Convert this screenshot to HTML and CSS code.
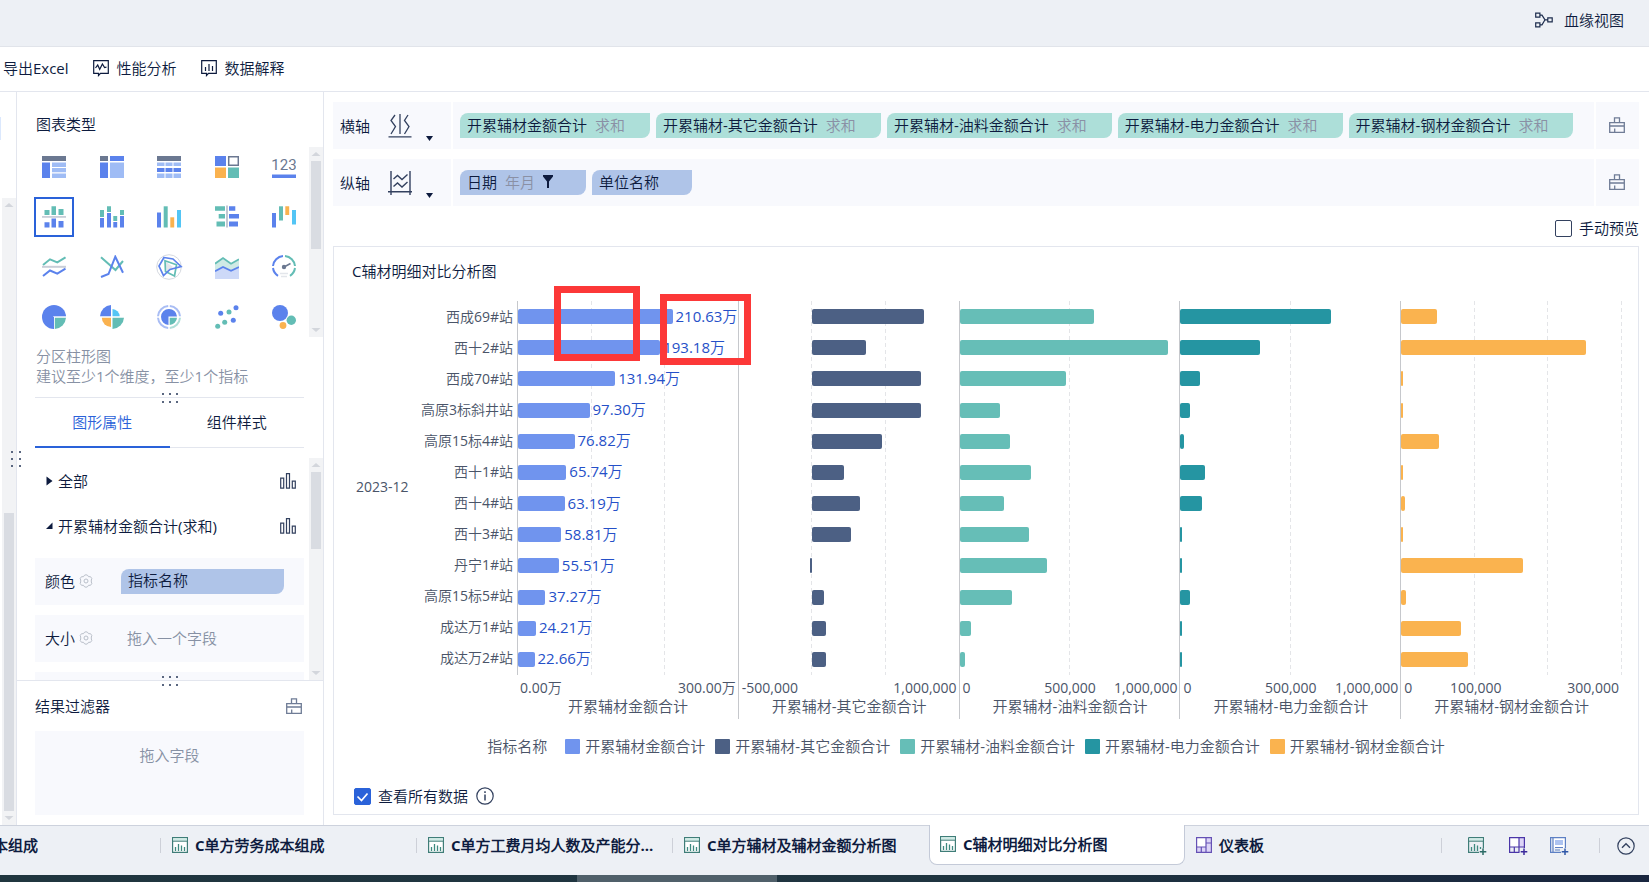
FILE: index.html
```html
<!DOCTYPE html>
<html lang="zh-CN">
<head>
<meta charset="utf-8">
<title>C辅材明细对比分析图</title>
<link rel="stylesheet" href="styles.css">
</head>
<body>
<svg class="defs" aria-hidden="true">
  <symbol id="brush" viewBox="0 0 16 16"><path d="M.7 5.7h14.6v9.6H.7zM5.5 5.7V.8h5v4.9M.7 9h14.6M5.7 11.5v3.8" fill="none" stroke="#6f7c96" stroke-width="1.3"/></symbol>
  <symbol id="bars" viewBox="0 0 16 16"><path d="M.7 5.2h3v10H.7zM6.5.7h3v14.5h-3zM12.3 8.2h3v7h-3z" fill="none" stroke="#33415f" stroke-width="1.2"/></symbol>
  <symbol id="gear" viewBox="0 0 14 14"><path d="M5.2 1.500L7 .700l1.800.800.700 1.200h2l1.300 1.800-.500 1.500v2l.5 1.500-1.300 1.800h-2l-.700 1.200-1.800.800-1.800-.800-.700-1.200h-2L1.200 9.500 1.700 8V6l-.500-1.500 1.300-1.800h2z" fill="none" stroke="#b9bfc9"/><circle cx="7" cy="7" r="2" fill="none" stroke="#b9bfc9"/></symbol>
  <symbol id="sheet" viewBox="0 0 16 16"><path d="M.6.6h14.8v14.8H.6z" fill="#fff" stroke="#3f7d78" stroke-width="1.2"/><path d="M1.2 1.2h13.6v2.6H1.2z" fill="#cfeae5"/><path d="M1 4.2h14" stroke="#3f7d78"/><path d="M3.5 10v4M6.5 7v7M9.5 8.5V14M12.5 10v4" stroke="#3f8a80" stroke-width="1.3"/></symbol>
  <symbol id="board" viewBox="0 0 16 16"><path d="M.6.6h14.800v14.800H.6z" fill="#dcd4f7"/><path d="M1 1h9v9H1z" fill="#fff"/><path d="M.6.6h14.8v14.8H.6zM10 .6v14.8M.6 10h9.400M5.3 10v5.4M10 6h5.4" fill="none" stroke="#6551b5" stroke-width="1.2"/></symbol>
  <symbol id="up" viewBox="0 0 10 4"><path d="M5 0l4.5 4h-9z" fill="#d3d6dc"/></symbol>
  <symbol id="down" viewBox="0 0 10 4"><path d="M5 4L.5 0h9z" fill="#d3d6dc"/></symbol>
  <symbol id="dots" viewBox="0 0 18 11"><path d="M1 1h2v2H1zM8 1h2v2H8zM15 1h2v2h-2zM1 9h2v2H1zM8 9h2v2H8zM15 9h2v2h-2z" fill="#5a6780"/></symbol>
</svg>

<header class="topbar">
  <a class="lineage" href="#">
    <svg width="18" height="16" viewBox="0 0 18 16"><path d="M.7 1.2h4.2v4H.7zM.7 10.8h4.2v4H.7zM12.8 5.8h4.4v4h-4.4zM5 3.2h2l3 4.6h2.8M5 12.8h2l3-5" fill="none" stroke="#1d2c4d" stroke-width="1.2"/></svg>
    血缘视图
  </a>
</header>

<nav class="toolbar">
  <button type="button">导出Excel</button>
  <button type="button"><svg width="16" height="17" viewBox="0 0 16 17"><path d="M.7.7h14.6v12.6H7.5l-2 2.2v-2.2H.7z" fill="none" stroke="#0d1b3e" stroke-width="1.2"/><path d="M2.5 8l2.2-3 2 4.3 2.7-5.3 2.2 3.6 1.9-.4" fill="none" stroke="#0d1b3e" stroke-width="1.2"/></svg>性能分析</button>
  <button type="button"><svg width="16" height="17" viewBox="0 0 16 17"><path d="M.7.7h14.6v12.6H7.5l-2 2.2v-2.2H.7z" fill="none" stroke="#0d1b3e" stroke-width="1.2"/><path d="M4.5 7v4M8 4v7M11.5 6v5" stroke="#0d1b3e" stroke-width="1.2"/></svg>数据解释</button>
</nav>

<div class="workspace">
  <aside class="rail">
    <div class="rail-top"><span class="rail-hint"></span></div>
    <div class="scroll rail-scroll"><svg><use href="#up"/></svg><span class="gap"></span><i class="thumb"></i><svg><use href="#down"/></svg></div>
  </aside>

  <aside class="panel">
    <svg class="side-dots" width="11" height="18" viewBox="0 0 11 18"><path d="M1 1h2v2H1zM9 1h2v2H9zM1 8h2v2H1zM9 8h2v2H9zM1 15h2v2H1zM9 15h2v2H9z" fill="#5a6780"/></svg>
    <h2 class="panel-title">图表类型</h2>
    <div class="with-scroll">
      <div class="types">
        <button type="button" aria-label="分组表"><svg viewBox="0 0 24 24"><path fill="#6b7891" d="M0 1h24v5H0z"/><path fill="#5b82ec" d="M0 7.5h8V23H0z"/><path fill="#9fbcf5" d="M10 7.5h14V12H10zM10 13h14v4.300H10zM10 18.500h14V23H10z"/></svg></button>
        <button type="button" aria-label="交叉表"><svg viewBox="0 0 24 24"><path fill="#6b7891" d="M0 1h8v5H0z"/><path fill="#5b82ec" d="M10 1h14v5H10zM0 7.500h8V23H0z"/><path fill="#9fbcf5" d="M10 7.500h14V23H10z"/></svg></button>
        <button type="button" aria-label="明细表"><svg viewBox="0 0 24 24"><path fill="#6b7891" d="M0 1h24v5H0z"/><path fill="#9fbcf5" d="M0 7.500h7.500V11H0zM8.500 7.500h7V11h-7zM16.500 7.500H24V11h-7.500zM0 18.500h7.500V23H0zM8.500 18.500h7V23h-7zM16.500 18.500H24V23h-7.500z"/><path fill="#5b82ec" d="M0 13h7.500v4H0zM8.500 13h7v4h-7zM16.500 13H24v4h-7.500z"/></svg></button>
        <button type="button" aria-label="颜色表格"><svg viewBox="0 0 24 24"><path fill="#5b82ec" d="M0 1h11v10H0z"/><path fill="none" stroke="#6b7891" stroke-width="1.500" d="M13.700 1.700h9.600v8.500h-9.600z"/><path fill="#fab24f" d="M0 12.500h11V23H0z"/><path fill="#63bdb5" d="M13 12.500h11V23H13z"/></svg></button>
        <button type="button" aria-label="KPI指标卡"><svg viewBox="0 0 24 24"><text class="kpi" x="12" y="14.500" text-anchor="middle">123</text><path fill="#5b82ec" d="M0 19.500h24V23H0z"/></svg></button>

        <button type="button" class="on" aria-label="分区柱形图"><svg viewBox="0 0 24 24"><path fill="#63bdb5" d="M2.500 5h5v5h-5zM9.500 1.300H14V10H9.500zM16.500 4h5v6h-5z"/><path fill="#c9ced8" d="M0 11h24v1.800H0z"/><path fill="#5b82ec" d="M2.500 17.300h5v5.200h-5zM9.500 13.500H14v9H9.500zM16.500 16h5v6.500h-5z"/></svg></button>
        <button type="button" aria-label="堆积柱形图"><svg viewBox="0 0 24 24"><path fill="#63bdb5" d="M0 5h4v7H0zM7 1.300h4V7H7zM13.300 11h3.900v5h-3.900zM20 5h4v5h-4z"/><path fill="#5b82ec" d="M0 13h4v9.500H0zM7 8h4v14.500H7zM13.300 17h3.900v5.500h-3.900zM20 11h4v11.500h-4z"/></svg></button>
        <button type="button" aria-label="多系列柱形图"><svg viewBox="0 0 24 24"><path fill="#5b82ec" d="M0 7.500h4v15H0z"/><path fill="#63bdb5" d="M6.700 1.300h4v21.200h-4z"/><path fill="#fab24f" d="M13.300 12.300h3.900v10.200h-3.900z"/><path fill="#53c5f5" d="M20 5h4v17.500h-4z"/></svg></button>
        <button type="button" aria-label="对比柱状图"><svg viewBox="0 0 24 24"><path fill="#63bdb5" d="M0 1.300h10v4.500H0zM3.700 9H10v4.500H3.700zM1.500 16.500H10V21.500H1.500z"/><path fill="#c3c8d3" d="M11 .5h2v22h-2z"/><path fill="#5b82ec" d="M14 1.300h6.300v4.500H14zM14 9h10v4.500H14zM14 16.500h9V21.500h-9z"/></svg></button>
        <button type="button" aria-label="瀑布图"><svg viewBox="0 0 24 24"><path fill="#5b82ec" d="M0 8h4v14.500H0z"/><path fill="#63bdb5" d="M7 1.300h4V15.500H7z"/><path fill="#fab24f" d="M13.300 1.300h3.900V10h-3.900z"/><path fill="#53c5f5" d="M20 5h4v14.500h-4z"/></svg></button>

        <button type="button" aria-label="分区折线图"><svg viewBox="0 0 24 24"><g fill="none" stroke-width="2"><path stroke="#63bdb5" d="M1 10l7-5.700 7.300 3L23.500 2.300"/><path stroke="#c9ced8" d="M0 11.800h24"/><path stroke="#5b82ec" d="M1 21l7-5.500 7.300 3.200 8.200-5"/></g></svg></button>
        <button type="button" aria-label="多系列折线图"><svg viewBox="0 0 24 24"><g fill="none" stroke-width="2"><path stroke="#63bdb5" d="M1 2.300L15.500 15 23 6"/><path stroke="#5b82ec" d="M1 22l7.500-3 6.800-17.300L23 17.700"/></g></svg></button>
        <button type="button" aria-label="雷达图"><svg viewBox="0 0 24 24" overflow="visible"><circle cx="12" cy="12" r="12.300" fill="none" stroke="#d5d9e0"/><path fill="#e3e6eb" d="M8 6l8 6-6 5z"/><g fill="none" stroke-width="1.700"><path stroke="#63bdb5" d="M8 5.700l11.500 4-2 11.300-9-4.500z"/><path stroke="#5b82ec" d="M7 2.500l9 1.500 8 7.500-11 3L6.500 20.500 2 11z"/></g></svg></button>
        <button type="button" aria-label="面积图"><svg viewBox="0 0 24 24"><path fill="#cfeae5" d="M0 8.700L8 3l8 5.700 8-4.400V12l-8 3.700L8 12l-8 4.300z"/><path fill="#cdd9f8" d="M0 16.300L8 12l8 3.700L24 12v12H0z"/><g fill="none" stroke-width="1.800"><path stroke="#63bdb5" d="M0 8.700L8 3l8 5.700 8-4.400"/><path stroke="#5b82ec" d="M0 16.300L8 12l8 3.700L24 12"/></g></svg></button>
        <button type="button" aria-label="仪表盘"><svg viewBox="0 0 24 24"><g fill="none" stroke-width="2"><path stroke="#5b82ec" d="M6 20.800A11 11 0 0 1 1 13M1 11A11 11 0 0 1 11 1"/><path stroke="#63bdb5" d="M13 1a11 11 0 0 1 10 10M23 13a11 11 0 0 1-5 7.800"/></g><path stroke="#6b7891" stroke-width="1.500" d="M12 12l6.500-3.500"/><circle cx="12" cy="12" r="2.200" fill="#6b7891"/><path stroke="#e3e6eb" stroke-width="1.500" d="M8 18.500h8M9 21.500h6"/></svg></button>

        <button type="button" aria-label="饼图"><svg viewBox="0 0 24 24"><circle cx="12" cy="12" r="12" fill="#5b82ec"/><path fill="#fff" d="M11.300 11.300H25V25H11.300z"/><path fill="#63bdb5" d="M12.800 12.800H24A12 12 0 0 1 12.800 24z"/><path fill="#5b82ec" d="M11 12h1v12h-1z"/></svg></button>
        <button type="button" aria-label="玫瑰图"><svg viewBox="0 0 24 24"><path fill="#5b82ec" d="M11 0v11.300H0A12 12 0 0 1 11 0z"/><path fill="#53c5f5" d="M12.500 4v7.300h7.200A7.700 7.700 0 0 0 12.500 4z"/><path fill="#fab24f" d="M11 12.700V22a9.500 9.500 0 0 1-9.200-9.300z"/><path fill="#63bdb5" d="M12.500 12.700V24A12 12 0 0 0 24 12.700z"/></svg></button>
        <button type="button" aria-label="多层饼图"><svg viewBox="0 0 24 24"><g fill="none" stroke-width="2"><path stroke="#a9bdf4" d="M11.200 23A11 11 0 0 1 1 12.800M1 11.200A11 11 0 0 1 11.200 1M12.800 1A11 11 0 0 1 23 11.200"/><path stroke="#b1dfd9" d="M23 12.800A11 11 0 0 1 12.800 23"/></g><path fill="#5b82ec" d="M20 11.500A8 8 0 1 0 11.500 20v-8.500z"/><path fill="#63bdb5" d="M12.700 12.700H20a8 8 0 0 1-7.300 7.300z"/></svg></button>
        <button type="button" aria-label="散点图"><svg viewBox="0 0 24 24"><g fill="#5b82ec"><circle cx="5.700" cy="8.300" r="2.500"/><circle cx="21" cy="2.700" r="2.500"/><circle cx="18.300" cy="15.300" r="2.500"/></g><g fill="#63bdb5"><circle cx="14" cy="7" r="2.500"/><circle cx="2.700" cy="21.300" r="2.500"/><circle cx="9.700" cy="17.300" r="2.500"/></g></svg></button>
        <button type="button" aria-label="聚合气泡图"><svg viewBox="0 0 24 24"><circle cx="8" cy="8" r="8" fill="#5b82ec"/><circle cx="19.300" cy="15.300" r="4.700" fill="#63bdb5"/><circle cx="11" cy="20.500" r="3.400" fill="#fab24f"/></svg></button>
      </div>
      <div class="scroll types-scroll"><svg><use href="#up"/></svg><i class="thumb"></i><span class="gap"></span><svg><use href="#down"/></svg></div>
    </div>
    <p class="desc">分区柱形图<br>建议至少1个维度，至少1个指标<svg class="dots" width="18" height="11"><use href="#dots"/></svg></p>
    <div class="tabs">
      <button type="button" class="on">图形属性</button>
      <button type="button">组件样式</button>
    </div>
    <div class="with-scroll props-wrap">
      <div class="props">
        <button type="button" class="fold"><svg width="7" height="10" viewBox="0 0 7 10"><path d="M.5.500L6.500 5l-6 4.500z" fill="#0d1b3e"/></svg><span>全部</span><svg class="kind" width="16" height="16"><use href="#bars"/></svg></button>
        <button type="button" class="fold"><svg width="7" height="10" viewBox="0 0 7 10"><path d="M6.500 1.500V8H0z" fill="#0d1b3e"/></svg><span>开累辅材金额合计(求和)</span><svg class="kind" width="16" height="16"><use href="#bars"/></svg></button>
        <div class="prop"><span class="name">颜色</span><svg width="14" height="14"><use href="#gear"/></svg><span class="pill dim">指标名称</span></div>
        <div class="prop"><span class="name">大小</span><svg width="14" height="14"><use href="#gear"/></svg><span class="hint">拖入一个字段</span></div>
        <div class="prop"></div>
      </div>
      <div class="scroll props-scroll"><svg><use href="#up"/></svg><i class="thumb"></i><span class="gap"></span><svg><use href="#down"/></svg></div>
    </div>
    <section class="filters">
      <svg class="dots" width="18" height="11"><use href="#dots"/></svg>
      <div class="filters-head"><h2>结果过滤器</h2><button type="button" aria-label="清空"><svg width="16" height="16"><use href="#brush"/></svg></button></div>
      <div class="drop">拖入字段</div>
    </section>
  </aside>

  <main class="main">
    <div class="shelf">
      <div class="shelf-name">横轴
        <svg width="24" height="24" viewBox="0 0 24 24"><path d="M.5 22.800h23M12 0v20M7 1L3 6.500l4.500 6L3 20M20 1l-3.500 5.500 4.500 6-4.500 7.500" fill="none" stroke="#33415f" stroke-width="1.300"/></svg>
        <svg class="caret" width="7" height="5" viewBox="0 0 7 5"><path d="M0 0h7L3.500 5z" fill="#0d1b3e"/></svg>
      </div>
      <div class="shelf-items">
        <span class="pill num">开累辅材金额合计<em>求和</em></span>
        <span class="pill num">开累辅材-其它金额合计<em>求和</em></span>
        <span class="pill num">开累辅材-油料金额合计<em>求和</em></span>
        <span class="pill num">开累辅材-电力金额合计<em>求和</em></span>
        <span class="pill num">开累辅材-钢材金额合计<em>求和</em></span>
      </div>
      <button type="button" class="shelf-clear" aria-label="清空横轴"><svg width="16" height="16"><use href="#brush"/></svg></button>
    </div>
    <div class="shelf">
      <div class="shelf-name">纵轴
        <svg width="24" height="24" viewBox="0 0 24 24"><path d="M3 0v24M22 0v24M0 20.800h24.500M5.500 8l4-3.500 4.500 4 5.500-5M5.500 15.500l4-3.500 4.500 4 5.500-5" fill="none" stroke="#33415f" stroke-width="1.400"/></svg>
        <svg class="caret" width="7" height="5" viewBox="0 0 7 5"><path d="M0 0h7L3.500 5z" fill="#0d1b3e"/></svg>
      </div>
      <div class="shelf-items">
        <span class="pill dim">日期<em>年月</em><svg width="10" height="13" viewBox="0 0 10 13"><path d="M0 0h10v1.500L6 6.500V13H4V6.500L0 1.500z" fill="#0d1b3e"/></svg></span>
        <span class="pill dim">单位名称</span>
      </div>
      <button type="button" class="shelf-clear" aria-label="清空纵轴"><svg width="16" height="16"><use href="#brush"/></svg></button>
    </div>
    <div class="preview"><label><input type="checkbox">手动预览</label></div>

    <section class="card">
      <h1>C辅材明细对比分析图</h1>
      <div class="chart">
        <div class="cats">
          <span class="date">2023-12</span>
          <ul>
            <li>西成69#站</li><li>西十2#站</li><li>西成70#站</li><li>高原3标斜井站</li><li>高原15标4#站</li><li>西十1#站</li><li>西十4#站</li><li>西十3#站</li><li>丹宁1#站</li><li>高原15标5#站</li><li>成达万1#站</li><li>成达万2#站</li>
          </ul>
        </div>

        <div class="facet first">
          <div class="plot c1">
            <div class="grid thirds"><i></i><i></i><i class="none"></i></div>
            <div class="row"><i style="width:70%"></i><b>210.63万</b></div>
            <div class="row"><i style="width:64.400%"></i><b>193.18万</b></div>
            <div class="row"><i style="width:44%"></i><b>131.94万</b></div>
            <div class="row"><i style="width:32.400%"></i><b>97.30万</b></div>
            <div class="row"><i style="width:25.600%"></i><b>76.82万</b></div>
            <div class="row"><i style="width:21.900%"></i><b>65.74万</b></div>
            <div class="row"><i style="width:21.100%"></i><b>63.19万</b></div>
            <div class="row"><i style="width:19.600%"></i><b>58.81万</b></div>
            <div class="row"><i style="width:18.500%"></i><b>55.51万</b></div>
            <div class="row"><i style="width:12.400%"></i><b>37.27万</b></div>
            <div class="row"><i style="width:8.100%"></i><b>24.21万</b></div>
            <div class="row"><i style="width:7.500%"></i><b>22.66万</b></div>
          </div>
          <div class="axis"><div class="ticks"><span>0.00万</span><span></span><span>300.00万</span></div><div class="axis-name">开累辅材金额合计</div></div>
        </div>

        <div class="facet">
          <div class="plot c2 shifted">
            <div class="grid thirds"><i></i><i></i><i class="none"></i></div>
            <div class="row"><i style="width:75.700%"></i></div>
            <div class="row"><i style="width:36.700%"></i></div>
            <div class="row"><i style="width:73.500%"></i></div>
            <div class="row"><i style="width:73.500%"></i></div>
            <div class="row"><i style="width:47%"></i></div>
            <div class="row"><i style="width:21.700%"></i></div>
            <div class="row"><i style="width:32.500%"></i></div>
            <div class="row"><i style="width:26.500%"></i></div>
            <div class="row neg"><i style="width:2%"></i></div>
            <div class="row"><i style="width:8.200%"></i></div>
            <div class="row"><i style="width:9.400%"></i></div>
            <div class="row"><i style="width:9.400%"></i></div>
          </div>
          <div class="axis"><div class="ticks"><span>-500,000</span><span></span><span>1,000,000</span></div><div class="axis-name">开累辅材-其它金额合计</div></div>
        </div>

        <div class="facet">
          <div class="plot c3">
            <div class="grid halves"><i></i><i class="none"></i></div>
            <div class="row"><i style="width:61%"></i></div>
            <div class="row"><i style="width:94.300%"></i></div>
            <div class="row"><i style="width:48.400%"></i></div>
            <div class="row"><i style="width:18.300%"></i></div>
            <div class="row"><i style="width:22.900%"></i></div>
            <div class="row"><i style="width:32.300%"></i></div>
            <div class="row"><i style="width:20%"></i></div>
            <div class="row"><i style="width:31.400%"></i></div>
            <div class="row"><i style="width:39.800%"></i></div>
            <div class="row"><i style="width:23.900%"></i></div>
            <div class="row"><i style="width:5.200%"></i></div>
            <div class="row"><i style="width:2.600%"></i></div>
          </div>
          <div class="axis"><div class="ticks"><span>0</span><span>500,000</span><span>1,000,000</span></div><div class="axis-name">开累辅材-油料金额合计</div></div>
        </div>

        <div class="facet">
          <div class="plot c4">
            <div class="grid halves"><i></i><i class="none"></i></div>
            <div class="row"><i style="width:68.200%"></i></div>
            <div class="row"><i style="width:36%"></i></div>
            <div class="row"><i style="width:8.800%"></i></div>
            <div class="row"><i style="width:4.300%"></i></div>
            <div class="row"><i style="width:1.500%"></i></div>
            <div class="row"><i style="width:11%"></i></div>
            <div class="row"><i style="width:9.700%"></i></div>
            <div class="row"><i style="width:0.800%"></i></div>
            <div class="row"><i style="width:0.800%"></i></div>
            <div class="row"><i style="width:4.300%"></i></div>
            <div class="row"><i style="width:0.800%"></i></div>
            <div class="row"><i style="width:0.800%"></i></div>
          </div>
          <div class="axis"><div class="ticks"><span>0</span><span>500,000</span><span>1,000,000</span></div><div class="axis-name">开累辅材-电力金额合计</div></div>
        </div>

        <div class="facet">
          <div class="plot c5">
            <div class="grid thirds"><i></i><i></i><i></i></div>
            <div class="row"><i style="width:16.400%"></i></div>
            <div class="row"><i style="width:83.800%"></i></div>
            <div class="row"><i style="width:0.700%"></i></div>
            <div class="row"><i style="width:0.700%"></i></div>
            <div class="row"><i style="width:17.200%"></i></div>
            <div class="row"><i style="width:0.700%"></i></div>
            <div class="row"><i style="width:1.800%"></i></div>
            <div class="row"><i style="width:0.700%"></i></div>
            <div class="row"><i style="width:55%"></i></div>
            <div class="row"><i style="width:2.300%"></i></div>
            <div class="row"><i style="width:27.200%"></i></div>
            <div class="row"><i style="width:30.100%"></i></div>
          </div>
          <div class="axis"><div class="ticks sixths"><span>0</span><span>100,000</span><span>300,000</span></div><div class="axis-name">开累辅材-钢材金额合计</div></div>
        </div>
        <div class="mark mark-bars"></div>
        <div class="mark mark-values"></div>
      </div>

      <div class="legend">
        <span class="legend-title">指标名称</span>
        <span class="key c1"><i></i>开累辅材金额合计</span>
        <span class="key c2"><i></i>开累辅材-其它金额合计</span>
        <span class="key c3"><i></i>开累辅材-油料金额合计</span>
        <span class="key c4"><i></i>开累辅材-电力金额合计</span>
        <span class="key c5"><i></i>开累辅材-钢材金额合计</span>
      </div>
      <div class="card-foot">
        <label><input type="checkbox" checked>查看所有数据</label>
        <svg width="18" height="18" viewBox="0 0 18 18"><circle cx="9" cy="9" r="8.200" fill="none" stroke="#33415f" stroke-width="1.200"/><path d="M9 7.500v6M9 4.300V6" stroke="#33415f" stroke-width="1.500"/></svg>
      </div>
    </section>
  </main>
</div>

<footer class="sheets">
  <button type="button" class="sheet cut">本组成</button>
  <button type="button" class="sheet"><svg width="16" height="16"><use href="#sheet"/></svg>C单方劳务成本组成</button>
  <button type="button" class="sheet"><svg width="16" height="16"><use href="#sheet"/></svg>C单方工费月均人数及产能分...</button>
  <button type="button" class="sheet last"><svg width="16" height="16"><use href="#sheet"/></svg>C单方辅材及辅材金额分析图</button>
  <button type="button" class="sheet on"><svg width="16" height="16"><use href="#sheet"/></svg>C辅材明细对比分析图</button>
  <button type="button" class="sheet last"><svg width="16" height="16"><use href="#board"/></svg>仪表板</button>
  <div class="sheet-tools">
    <button type="button" aria-label="添加组件"><svg width="19" height="18" viewBox="0 0 19 18"><path d="M.6.600h14.800v10.900M11 15.400H.6V.600" fill="none" stroke="#3f7d78" stroke-width="1.200"/><path d="M1.200 1.200h13.600v2.600H1.200z" fill="#cfeae5"/><path d="M1 4.200h14" stroke="#3f7d78"/><path d="M3.500 10v4M6.500 7v7M9.500 8.500V14M12.500 10v2" stroke="#3f8a80" stroke-width="1.300"/><path d="M15 11.500v6.500M11.700 14.800h6.600" stroke="#2b6b66" stroke-width="1.500"/></svg></button>
    <button type="button" aria-label="添加仪表板"><svg width="19" height="18" viewBox="0 0 19 18"><path d="M10 1h5v9h-5z" fill="#dcd4f7"/><path d="M1 1h9v9H1z" fill="#fff"/><path d="M10.500 15.400H.6V.600h14.800v10.400M10 .600v14.800M.6 10h14.800M5.300 10v5.400" fill="none" stroke="#4a35a8" stroke-width="1.200"/><path d="M15 11.500v6.500M11.700 14.800h6.600" stroke="#3c2a9c" stroke-width="1.500"/></svg></button>
    <button type="button" aria-label="添加文档"><svg width="19" height="18" viewBox="0 0 19 18"><path d="M3 1h12v10H3z" fill="#fff"/><path d="M5 3h8v5H5z" fill="#adc3f0"/><path d="M11 15.400H.6V.600h14.800v10.400M3 .600v14.800M5 10.500h8M5 13h5" fill="none" stroke="#5d80c4" stroke-width="1.200"/><path d="M15 11.500v6.500M11.700 14.800h6.600" stroke="#2f57a8" stroke-width="1.500"/></svg></button>
    <button type="button" class="collapse" aria-label="展开"><svg width="18" height="18" viewBox="0 0 18 18"><circle cx="9" cy="9" r="8.200" fill="none" stroke="#33415f" stroke-width="1.200"/><path d="M5 10.800l4-4 4 4" fill="none" stroke="#33415f" stroke-width="1.400"/></svg></button>
  </div>
</footer>
<div class="strip"><i></i></div>
</body>
</html>
```

FILE: styles.css
```css
* { box-sizing: border-box; }

body {
  margin: 0;
  height: 100vh;
  display: flex;
  flex-direction: column;
  overflow: hidden;
  background: #fff;
  color: #0d1b3e;
  font: 400 15px/20px "Open Sans", "Noto Sans CJK SC DemiLight", "Noto Sans CJK SC", sans-serif;
  white-space: nowrap;
}

button {
  margin: 0;
  padding: 0;
  border: 0;
  background: none;
  color: inherit;
  font: inherit;
}

h1, h2, p, ul { margin: 0; padding: 0; font: inherit; }
ul { list-style: none; }
svg { display: block; flex: none; }
.defs { position: absolute; width: 0; height: 0; }

/* header */
.topbar {
  flex: 0 0 47px;
  display: flex;
  justify-content: flex-end;
  padding: 0 25px 6px 0;
  background: #edf0f5;
  border-bottom: 1px solid #e1e4ea;
}
.lineage {
  display: flex;
  align-items: center;
  gap: 11px;
  color: inherit;
  text-decoration: none;
}
.toolbar {
  flex: 0 0 45px;
  display: flex;
  gap: 24px;
  padding: 0 0 2px 3px;
  border-bottom: 1px solid #e3e6ee;
}
.toolbar button { display: flex; align-items: center; gap: 8px; }

.workspace { flex: 1; display: flex; min-height: 0; }

/* scrollbars */
.scroll {
  flex: 0 0 14px;
  display: flex;
  flex-direction: column;
  align-items: center;
  padding: 5px 0;
  background: #f2f3f5;
}
.scroll svg { width: 10px; height: 4px; }
.thumb { width: 10px; background: #d9dce2; }
.gap { flex: 1; }

/* left rail */
.rail {
  flex: 0 0 17px;
  display: flex;
  flex-direction: column;
  border-right: 1px solid #e3e6ee;
}
.rail-top { flex: 0 0 106px; padding-top: 25px; }
.rail-hint { display: block; width: 1px; height: 23px; background: #dbe8fd; }
.rail-scroll { flex: 1; margin-left: 2px; }
.rail-scroll .thumb { flex: 0 0 298px; margin-bottom: 5px; }

/* chart panel */
.panel {
  position: relative;
  flex: 0 0 307px;
  display: flex;
  flex-direction: column;
  border-right: 1px solid #e3e6ee;
}
.side-dots { position: absolute; left: -7px; top: 358px; }
.panel-title { padding: 22px 19px 13px; }
.with-scroll { display: flex; }
.types {
  flex: 1;
  display: grid;
  grid-template-columns: repeat(5, 40px);
  justify-content: space-between;
  row-gap: 10px;
  padding: 0 5px 0 17px;
}
.types button {
  display: flex;
  align-items: center;
  justify-content: center;
  height: 40px;
  border: 2px solid transparent;
}
.types .on { border-color: #2a62d9; }
.types svg { width: 24px; height: 24px; }
.kpi { font: 400 15px Roboto, sans-serif; fill: #6b7891; }
.types-scroll .thumb { flex: 0 0 88px; margin-top: 5px; }

.desc {
  position: relative;
  margin: 0 19px 0 18px;
  padding: 9px 1px 11px;
  border-bottom: 1px solid #e3e6ee;
  color: #8791a4;
}
.dots { position: absolute; left: 126px; bottom: -6px; }
.tabs {
  display: flex;
  margin: 0 19px 0 18px;
  border-bottom: 1px solid #e3e6ee;
}
.tabs button { flex: 1; height: 49px; padding-bottom: 2px; }
.tabs .on {
  height: 50px;
  margin-bottom: -1px;
  padding-bottom: 1px;
  border-bottom: 2px solid #2a62d9;
  color: #2a62d9;
}

.props-wrap { flex: 1; min-height: 0; margin-top: 10px; }
.props {
  flex: 1;
  overflow: hidden;
  padding: 0 5px 0 18px;
}
.props-scroll .thumb { flex: 0 0 77px; margin-top: 5px; }
.fold {
  display: flex;
  align-items: center;
  width: 100%;
  height: 45px;
  padding: 0 8px 0 11px;
  gap: 5px;
}
.kind { margin-left: auto; }
.prop {
  display: flex;
  align-items: center;
  gap: 4px;
  height: 47px;
  margin-top: 10px;
  padding: 0 20px 1px 10px;
  background: #f8f9fd;
}
.prop .pill { flex: 1; margin-left: 24px; }
.hint { margin-left: 30px; color: #8791a4; }

.filters {
  position: relative;
  padding: 0 19px 10px 18px;
  border-top: 1px solid #e3e6ee;
}
.filters .dots { left: 144px; top: -6px; }
.filters-head {
  display: flex;
  align-items: center;
  justify-content: space-between;
  height: 50px;
  padding: 0 2px 1px 0;
}
.drop {
  height: 84px;
  padding-top: 14px;
  background: #f8f9fd;
  color: #8791a4;
  text-align: center;
}

/* main area */
.main {
  flex: 1;
  min-width: 0;
  display: flex;
  flex-direction: column;
  padding: 10px 10px 10px 9px;
}
.shelf { display: flex; gap: 2px; height: 47px; margin-bottom: 10px; }
.shelf > * { background: #f8f9fd; }
.shelf-name {
  flex: 0 0 118px;
  display: flex;
  align-items: center;
  gap: 18px;
  padding-left: 7px;
}
.caret { align-self: flex-end; margin: 0 0 8px -4px; }
.shelf-items {
  flex: 1;
  min-width: 0;
  display: flex;
  align-items: center;
  gap: 6px;
  padding-left: 7px;
}
.shelf-clear {
  flex: 0 0 43px;
  display: flex;
  align-items: center;
  justify-content: center;
  padding: 0 2px 1px 0;
}
.pill {
  display: flex;
  align-items: center;
  gap: 8px;
  height: 25px;
  padding: 0 25px 2px 7px;
  border-radius: 8px 0;
}
.pill em { font-style: normal; color: #8a90a5; }
.num { background: #addfd9; }
.dim { padding-right: 33px; background: #afc4e8; }

.preview {
  display: flex;
  justify-content: flex-end;
  height: 30px;
  padding-bottom: 6px;
}
label { display: flex; align-items: center; gap: 7px; }
input[type="checkbox"] {
  appearance: none;
  width: 17px;
  height: 17px;
  margin: 0;
  border: 1px solid #33415f;
  border-radius: 2px;
}
input[type="checkbox"]:checked {
  border-color: #2a62d9;
  background: #2a62d9 url("data:image/svg+xml,%3Csvg xmlns='http://www.w3.org/2000/svg' viewBox='0 0 15 15'%3E%3Cpath d='M2.500 7.500l4 4 6-7' fill='none' stroke='white' stroke-width='1.700'/%3E%3C/svg%3E");
}

.card {
  flex: 1;
  min-height: 0;
  display: flex;
  flex-direction: column;
  border: 1px solid #e3e6ee;
  color: #4a5468;
}
.card h1 { padding: 14px 18px; color: #0d1b3e; }

.chart {
  position: relative;
  flex: 1;
  min-height: 0;
  display: grid;
  grid-template-columns: 184px repeat(5, minmax(0, 1fr));
  padding: 6px 16px 0 0;
}
.cats {
  display: flex;
  align-items: center;
  justify-content: space-between;
  margin-bottom: 46px;
  padding: 0 5px 0 22px;
  font-size: 14px;
}
.cats ul { height: 100%; display: grid; grid-auto-rows: 1fr; text-align: right; }
.cats li { display: flex; align-items: center; justify-content: flex-end; }

.facet { display: flex; flex-direction: column; margin-left: -1px; border-left: 1px solid #c6c8cc; }
.facet.first { border-left: 0; }
.facet.first .plot { border-left: 1px solid #c6c8cc; }
.plot { position: relative; flex: 1; display: grid; grid-auto-rows: 1fr; }
.grid { position: absolute; inset: 0; display: grid; }
.thirds { grid-template-columns: repeat(3, 1fr); }
.halves { grid-template-columns: repeat(2, 1fr); }
.grid i {
  background: repeating-linear-gradient(#e4e5e8 0 4px, transparent 4px 7px) right / 1px 100% no-repeat;
}
.grid .none { background: none; }
.row { position: relative; display: flex; align-items: center; gap: 3px; }
.row i { flex: none; height: 15px; border-radius: 2px; background: var(--c); }
.row b { padding-bottom: 2px; font-weight: 400; color: #2550c8; }
.shifted .row { padding-left: calc(100% / 3); }
.shifted .neg { justify-content: flex-end; padding: 0 67% 0 0; }

.c1 { --c: #7094ee; }
.c2 { --c: #4c6084; }
.c3 { --c: #66beb7; }
.c4 { --c: #2595a2; }
.c5 { --c: #fab34f; }

.axis { flex: 0 0 44px; padding-top: 3px; }
.ticks {
  display: grid;
  grid-template-columns: 1fr auto 1fr;
  padding: 0 3px;
  font-size: 14px;
}
.ticks span:last-child { text-align: right; }
.sixths { grid-template-columns: repeat(6, 1fr); }
.sixths span:nth-child(2) { grid-column: 2 / 4; text-align: center; }
.sixths span:last-child { grid-column: 4 / 7; }
.axis-name { line-height: 16px; text-align: center; }

/* annotations over the chart */
.mark { position: absolute; border: 7px solid #fc3838; }
.mark-bars { left: 220px; top: -9px; width: 86px; height: 75px; }
.mark-values { left: 326px; top: -1px; width: 91px; height: 71px; }

.legend {
  display: flex;
  align-items: center;
  justify-content: center;
  gap: 10px;
  height: 54px;
  padding-right: 40px;
}
.legend-title { margin-right: 8px; }
.key { display: flex; align-items: center; gap: 5px; }
.key i { width: 15px; height: 15px; border-radius: 1px; background: var(--c); }

.card-foot {
  display: flex;
  align-items: center;
  gap: 8px;
  height: 41px;
  padding: 5px 0 0 20px;
  color: #0d1b3e;
}

/* sheet tabs */
.sheets {
  flex: 0 0 50px;
  display: flex;
  background: #edf0f5;
  border-top: 1px solid #cdd2dd;
  font-weight: 700;
}
.sheet {
  position: relative;
  flex: 0 0 256px;
  display: flex;
  align-items: center;
  gap: 7px;
  height: 39px;
  padding: 0 0 1px 11px;
}
.sheet::after {
  content: "";
  position: absolute;
  right: 0;
  width: 1px;
  height: 15px;
  background: #cdd0d8;
}
.sheet.on::after, .sheet.last::after { content: none; }
.cut { flex-basis: 168px; margin-left: -7px; padding-left: 0; }
.sheet.on {
  margin-top: -1px;
  height: 40px;
  padding-left: 10px;
  background: #fff;
  border: 1px solid #c4cad8;
  border-top: 0;
  border-radius: 0 0 8px 8px;
}
.sheet-tools {
  margin-left: auto;
  display: flex;
  align-items: center;
  gap: 22px;
  height: 39px;
  padding-right: 17px;
}
.sheet-tools::before {
  content: "";
  width: 1px;
  height: 15px;
  margin-right: 4px;
  background: #cdd0d8;
}
.collapse {
  display: flex;
  align-items: center;
  gap: 17px;
  margin-left: 8px;
}
.collapse::before { content: ""; width: 1px; height: 15px; background: #cdd0d8; }

.strip {
  flex: 0 0 7px;
  padding-left: 35%;
  background: linear-gradient(90deg, #20363f, #1f3440 60%, #19263f);
}
.strip i { display: block; width: 200px; height: 7px; background: #50606a; }
```
